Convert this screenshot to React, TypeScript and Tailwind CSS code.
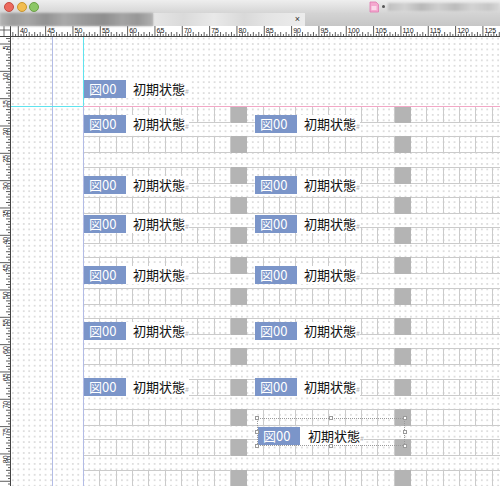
import React from "react";

const PX = 5.466;

// frames placed on the pasteboard (canvas-local coordinates)
const labels = [
  "left-[73px] top-[43px]",
  "left-[73px] top-[78px]",
  "left-[244px] top-[78px]",
  "left-[73px] top-[139px]",
  "left-[244px] top-[139px]",
  "left-[73px] top-[178px]",
  "left-[244px] top-[178px]",
  "left-[73px] top-[229px]",
  "left-[244px] top-[229px]",
  "left-[73px] top-[285px]",
  "left-[244px] top-[285px]",
  "left-[73px] top-[341px]",
  "left-[244px] top-[341px]",
];

function Label({ cls, gap = "ml-[7px]" }: { cls: string; gap?: string }) {
  return (
    <div className={`absolute flex h-[18px] items-center bg-white ${cls}`}>
      <span className="h-[18px] w-[42px] bg-[#7b95c9] pl-[5px] text-[13px] leading-[18px] text-white">図00</span>
      <span className={`${gap} text-[13px] leading-[18px] text-[#111]`}>初期状態</span>
      <span className="pt-[3px] text-[7px] leading-[18px] text-[#b0b0b0]">#</span>
    </div>
  );
}

function CellRow() {
  return (
    <div className="flex h-[17px] shrink-0 border-y border-l border-[#cbcbcb]">
      {Array.from({ length: 26 }, (_, i) =>
        i === 9 || i === 19 ? (
          <div key={i} className="-my-px h-[17px] w-[16.35px] shrink-0 bg-[#b4b4b4]" />
        ) : (
          <div key={i} className="h-full w-[16.35px] shrink-0 border-r border-[#cbcbcb]" />
        )
      )}
    </div>
  );
}

function HRuler() {
  const ticks = [];
  for (let u = 38; u <= 129; u += 0.5) {
    const x = 7.3 + (u - 40) * PX;
    const major = u % 5 === 0;
    const whole = u % 1 === 0;
    const h = major ? 10 : whole ? 4 : 2;
    ticks.push(<line key={u} x1={x} x2={x} y1={10 - h} y2={10} stroke="#333" strokeWidth={0.8} />);
    if (major)
      ticks.push(
        <text key={`t${u}`} x={x + 1.6} y={6.5} fontSize={7} fill="#222" fontFamily="Liberation Sans, sans-serif">
          {u}
        </text>
      );
  }
  return (
    <svg width={489} height={10} className="block">
      {ticks}
    </svg>
  );
}

function VRuler() {
  const ticks = [];
  for (let u = 3.5; u <= 87; u += 0.5) {
    const y = 7 + (u - 5) * PX;
    const major = u % 5 === 0;
    const whole = u % 1 === 0;
    const w = major ? 10 : whole ? 4 : 2;
    ticks.push(<line key={u} x1={10 - w} x2={10} y1={y} y2={y} stroke="#333" strokeWidth={0.8} />);
    if (major && u < 85)
      ticks.push(
        <text
          key={`t${u}`}
          transform={`translate(7.5 ${y + 1.5}) rotate(-90)`}
          textAnchor="end"
          fontSize={7}
          fill="#222"
          fontFamily="Liberation Sans, sans-serif"
        >
          {u}
        </text>
      );
  }
  return (
    <svg width={10} height={449} className="block">
      {ticks}
    </svg>
  );
}

export default function App() {
  return (
    <div className="relative h-[486px] w-[500px] overflow-hidden bg-white font-['Noto_Sans_CJK_JP','Noto_Sans',sans-serif]">
      {/* title bar */}
      <div className="flex h-[13px] items-center bg-gradient-to-b from-[#eeeeee] to-[#d5d5d5]">
        <span className="ml-[4px] h-[10px] w-[10px] rounded-full border border-[#c44b40] bg-[#ec6a5e]" />
        <span className="ml-[2.5px] h-[10px] w-[10px] rounded-full border border-[#c9952e] bg-[#f2bd4f]" />
        <span className="ml-[2.5px] h-[10px] w-[10px] rounded-full border border-[#6a9f45] bg-[#8cc766]" />
        <div className="ml-auto flex items-center">
          <svg width="12" height="12" viewBox="0 0 12 12" className="mr-[2px]">
            <path d="M2 1h6l2.5 2.5V11H2z" fill="#f4a9cf" stroke="#e07ab0" strokeWidth="0.8" />
            <rect x="3.5" y="5" width="5" height="4" fill="#fbd8ea" />
          </svg>
          <span className="mr-[3px] h-[3px] w-[3px] rounded-full bg-[#555]" />
          <div className="h-[8px] w-[112px] bg-[linear-gradient(90deg,#c0c0c0,#d2d2d2_15%,#b8b8b8_30%,#cfcfcf_45%,#bcbcbc_60%,#d3d3d3_75%,#c6c6c6_90%,#d8d8d8)] blur-[1px]" />
        </div>
      </div>

      {/* tab bar */}
      <div className="flex h-[13px] items-stretch bg-[#cdcdcd]">
        <div className="w-[153px] bg-[linear-gradient(90deg,#b4b4b4,#9c9c9c_8%,#a6a6a6_18%,#939393_30%,#aaaaaa_42%,#9a9a9a_55%,#8e8e8e_68%,#a4a4a4_80%,#979797_90%,#b0b0b0)] blur-[0.8px]" />
        <div className="flex w-[152px] items-center bg-[linear-gradient(90deg,#e6e6e6,#dadada_20%,#e9e9e9_40%,#d9d9d9_60%,#e4e4e4_75%,#ececec)]">
          <span className="ml-auto mr-[5px] text-[9px] leading-none text-[#333] font-['Liberation_Sans',sans-serif]">×</span>
        </div>
        <div className="flex-1 bg-gradient-to-b from-[#d4d4d4] to-[#c6c6c6]" />
      </div>

      {/* horizontal ruler */}
      <div className="flex h-[11px] border-b border-[#444] bg-white">
        <div className="w-[11px] shrink-0 border-r border-[#444]">
          <svg width={10} height={10} className="block">
            <line x1={4} x2={4} y1={0} y2={10} stroke="#444" strokeWidth={0.8} />
            <line x1={0} x2={10} y1={4} y2={4} stroke="#444" strokeWidth={0.8} />
          </svg>
        </div>
        <HRuler />
      </div>

      {/* ruler + pasteboard */}
      <div className="flex h-[449px]">
        <div className="w-[11px] shrink-0 border-r border-[#444] bg-white">
          <VRuler />
        </div>
        <div className="relative flex-1 bg-white bg-[radial-gradient(circle,#d9d9d9_0.6px,transparent_0.9px)] bg-[length:5.466px_5.466px] bg-[position:4.57px_4.27px]">
          <div className="ml-[72px] flex flex-col gap-[13.3px] pt-[69px]">
            {Array.from({ length: 13 }, (_, i) => (
              <CellRow key={i} />
            ))}
          </div>

          {/* guides */}
          <div className="absolute left-[41px] top-0 h-full w-px bg-[#b3bce6]" />
          <div className="absolute left-[72px] top-0 h-[69px] w-px bg-[#5fe3ee]" />
          <div className="absolute left-[72px] top-[69px] h-[380px] w-px bg-[#b3bce6]" />
          <div className="absolute left-0 top-[69px] h-px w-[72px] bg-[#5fe3ee]" />
          <div className="absolute left-[72px] right-0 top-[69px] h-px bg-[#f2a8c6]" />

          {labels.map((c) => (
            <Label key={c} cls={c} />
          ))}

          {/* selected frame */}
          <div className="absolute left-[246px] top-[381px] h-[28px] w-[148px] border border-dotted border-[#9a9a9a]" />
          <Label cls="left-[247px] top-[390px]" gap="ml-[8px]" />
          {[
            "left-[244px] top-[379px]",
            "left-[318px] top-[379px]",
            "left-[392px] top-[379px]",
            "left-[244px] top-[393px]",
            "left-[392px] top-[393px]",
            "left-[244px] top-[407px]",
            "left-[318px] top-[407px]",
            "left-[392px] top-[407px]",
          ].map((c) => (
            <span key={c} className={`absolute h-[4px] w-[4px] border border-[#9a9a9a] bg-white ${c}`} />
          ))}
        </div>
      </div>
    </div>
  );
}
